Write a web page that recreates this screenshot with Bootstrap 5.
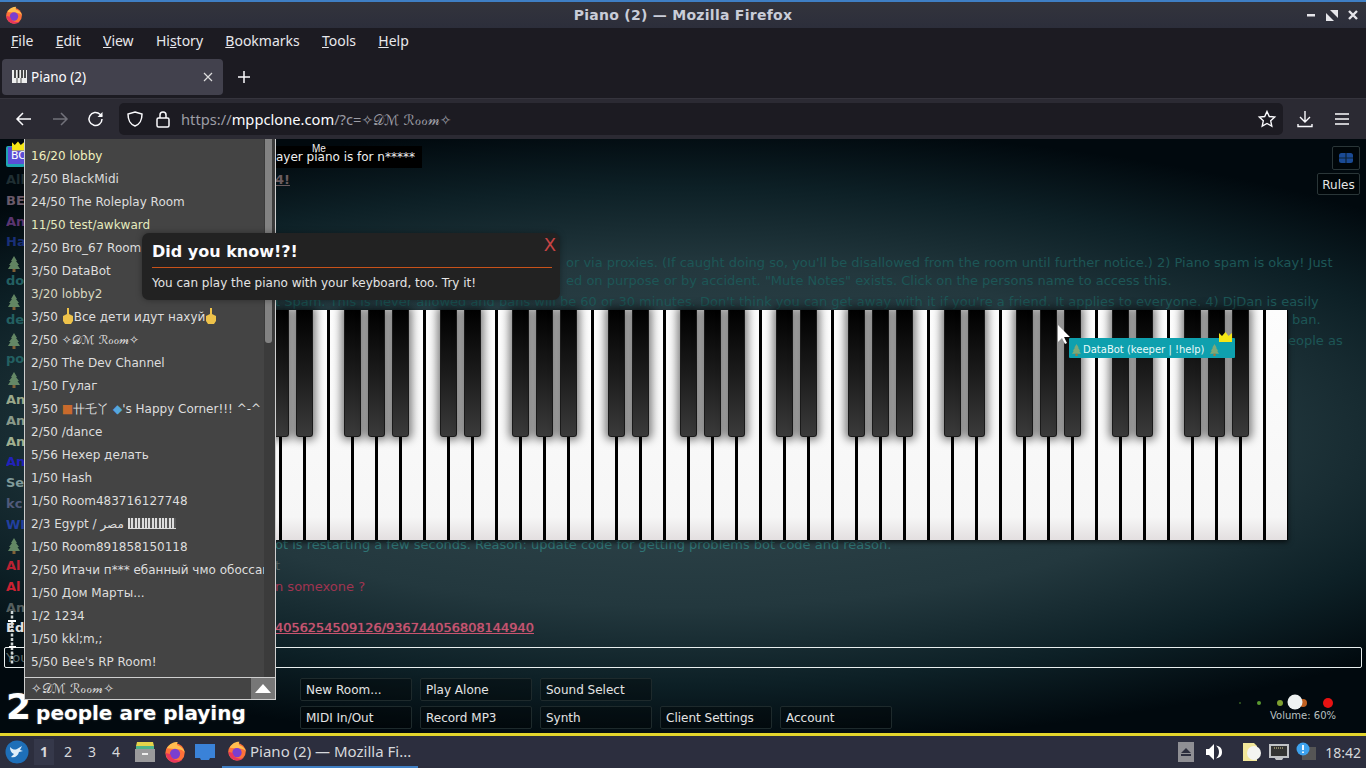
<!DOCTYPE html>
<html lang="en">
<head>
    <meta charset="UTF-8">
    <meta name="viewport" content="width=device-width, initial-scale=1.0">
    <title>Piano (2)</title>
    <link href="https://cdn.jsdelivr.net/npm/bootstrap@5.3.0/dist/css/bootstrap.min.css" rel="stylesheet">
    <style>
        html, body { height: 768px; }
        body { background: #000; font-family: "Noto Sans", sans-serif; color: #fbfbfe; }

        /* window chrome */
        .win-title { height: 28px; border-top: 2px solid #3f7fc4; background: linear-gradient(#33343c, #2c2e3b); }
        .win-title .caption { font: bold 14px "DejaVu Sans", sans-serif; color: #c9cdd8; letter-spacing: .27px; }
        .win-logo { left: 5px; top: 4px; }
        .win-btns { right: 6px; top: 6px; gap: 7px; }
        .menu-strip { height: 27px; background: #1c1b22; padding: 0 0 2px 11px; gap: 22.25px; font-size: 14px; color: #e8e8ec; }
        .tab-strip { height: 43px; background: #1c1b22; padding-left: 2px; }
        .tab-item { width: 221px; height: 36px; margin-top: 4px; background: #42414d; border-radius: 4px; font-size: 13.5px; padding: 0 10px; gap: 4px; }
        .tab-plus { margin-left: 5px; margin-top: 4px; }
        .tool-strip { height: 41px; background: #2b2a33; border-top: 1px solid #35343d; padding-left: 14px; }
        .tool-ico { width: 20px; height: 20px; }
        .tool-dl { margin-left: 12px; }
        .tool-menu { margin-left: 17px; }
        .url-box { width: 1164px; height: 32px; margin-left: 13px; background: #1c1b22; border-radius: 5px; padding: 0 6px 0 6px; font-size: 14.7px; color: #9d9da5; }
        .url-box b { font-weight: 400; color: #fbfbfe; }
        .url-script { font-family: "DejaVu Sans", serif; font-size: 14px; }

        /* the piano room */
        .room-stage { height: 594px; background: radial-gradient(ellipse 1000px 310px at 50% 50%, #33494f 0%, #23383e 55%, #0d2026 80%, #01090e 100%); font-family: "DejaVu Sans", sans-serif; }
        .top-btns { padding: 7px 6px 0 0; height: 56px; }
        .mini-btn { background: rgba(0,0,0,.3); border: 1px solid #2a3638; border-radius: 2px; }
        .net-btn { width: 28px; height: 24px; margin-bottom: 3px; }
        .rules-btn { width: 43px; height: 22px; font-size: 12px; color: #e6e6e6; line-height: 22px; text-align: center; }

        .chat-layer { left: 6px; top: 32px; right: 0; font-size: 13px; line-height: 18px; z-index: 0; }
        .chat-row { height: 18px; margin-bottom: 2.75px; white-space: nowrap; }
        .chat-row.wrapped { margin-bottom: 0; }
        .chat-nick { width: 269px; font-weight: 700; overflow: hidden; flex: none; }
        .chat-tree { margin-left: 2px; opacity: .75; }
        .chat-msg { color: #1d5656; }
        .msg-live { color: #2f7575; }
        .msg-grey { color: #54605f; }
        .msg-red { color: #a03450; }
        .msg-link { color: #c9546f; text-decoration: underline; letter-spacing: -.06px; text-shadow: 0 0 1px #c9546f; }
        .msg-dim { color: #6a5c5f; text-decoration: underline; font-weight: 700; }
        .ind-a { padding-left: 291px; }
        .ind-b { padding-left: 1017px; }
        .ind-c { padding-left: 1013px; }

        .piano-wrap { width: 1248px; height: 230px; margin: 115px 0 0 40px; background: #000; z-index: 1; box-shadow: 0 2px 5px rgba(0,0,0,.7); }
        .wkey { width: 21px; margin: 0 1.5px; height: 100%; background: linear-gradient(#fdfdfd 0%, #f6f6f6 90%, #e3dfe0 100%); }
        .bkey { top: 0; width: 17px; height: 127px; background: linear-gradient(#000 0%, #1b1b1b 50%, #3a3a3a 100%); border-radius: 0 0 3px 3px; border: 1px solid #1a1a1a; border-top: 0; box-shadow: 0 0 8px 3px rgba(0,0,0,.5); }

        .chat-box { width: auto; align-self: stretch; margin: 107px 4px 0; height: 21px; background: transparent; border: 1px solid #e8eeee; border-radius: 2px; padding: 0 1px; font-size: 13px; color: #789; z-index: 1; }
        .chat-box::placeholder { color: #5a6a6a; }
        .ctrl-row { margin-top: 10px; height: 50px; z-index: 1; }
        .people-box { width: 300px; color: #fff; font-weight: 700; line-height: 1; padding: 0 0 3px 6px; gap: 5px; text-shadow: 0 0 2px rgba(255,255,255,.35); }
        .people-num { font-size: 36px; }
        .people-txt { font-size: 20px; padding-bottom: 2px; }
        .ctl-btn { width: 112px; height: 23px; padding: 1px 0 0 5px; background: rgba(0,0,0,.3); border: 1px solid #1e2a2c; border-radius: 2px; color: #e4e4e4; font-size: 12px; line-height: 20px; text-align: left; }
        .btn-rows { gap: 5px; }
        .vol-box { width: 100px; margin-left: auto; margin-right: 28px; font-size: 10px; color: #b8c0c0; text-align: right; padding: 16px 2px 0 0; line-height: 12px; }

        /* overlays */
        .room-menu { left: 24px; top: 0; width: 252px; z-index: 3; }
        .room-scroll { height: 538px; background: #444; border-left: 1px solid #cfcfcf; border-right: 1px solid #cfcfcf; overflow: hidden; padding-top: 6px; }
        .room-track { top: 0; right: 0; width: 11px; bottom: 0; background: #3b3b3b; }
        .room-thumb { top: 0; right: 3px; width: 7px; height: 204px; background: #828282; border-radius: 0 0 3px 3px; }
        .room-row { height: 23px; line-height: 23px; padding: 0 0 0 6px; font-size: 12px; color: #dedede; background: transparent; border: 0; white-space: nowrap; overflow: hidden; width: 239px; }
        .room-row.lit { color: #f1f0bd; }
        .room-row.lit2 { color: #e4eabe; }
        .room-row.lit3 { color: #d8d8c0; }
        .room-keys { display: inline-block; width: 48px; height: 11px; vertical-align: -1px; background: repeating-linear-gradient(90deg, #ddd 0 2px, #555 2px 3.4px); border-bottom: 1px solid #ddd; }
        .room-hand { vertical-align: -3px; }
        .room-bear { color: #c96a2c; }
        .room-gem { color: #55a7dd; }
        .room-pick { height: 23px; background: #444; border: 1px solid #cfcfcf; font: 13px "DejaVu Sans", serif; color: #d8d8d8; padding-left: 6px; line-height: 21px; }
        .room-arrow { width: 24px; background: #777; }
        .tip-box { left: 142px; top: 94px; width: 418px; height: 67px; background: #222; border-radius: 7px; padding: 8px 10px; z-index: 4; box-shadow: 0 0 6px rgba(0,0,0,.35); }
        .tip-title { font-size: 16px; font-weight: 700; line-height: 22px; height: 27px; border-bottom: 1px solid #c9521a; width: 400px; }
        .tip-text { font-size: 12px; line-height: 18px; margin-top: 6px; color: #e4e4e4; }
        .tip-x { right: 4px; top: 1px; color: #c84444; font-size: 18px; line-height: 22px; }
        .bubble-box { left: 275px; top: 7px; width: 147px; height: 22px; background: #000; color: #eee; font-size: 12px; line-height: 23px; padding-left: 1px; z-index: 2; }
        .me-tag { left: 312px; top: 4px; font: 10px/12px "Liberation Sans", sans-serif; color: #eee; z-index: 3; }
        .bo-tag { left: 6px; top: 7px; width: 19px; height: 21px; background: #5b4fd6; border: 1px solid #1fa4b0; border-width: 1px 0 3px 2px; color: #fff; font-size: 11px; line-height: 18px; padding-left: 3px; border-radius: 2px; z-index: 1; overflow: hidden; }
        .crown-a { left: 12px; top: 2px; z-index: 2; }
        .bot-tag { left: 1069px; top: 199px; width: 166px; height: 20px; background: #0ea0ae; color: #e8fbfb; font-size: 10px; line-height: 20px; padding: 4px 0 0 3px; z-index: 2; border-radius: 1px; }
        .bot-name { margin: 0 6px 0 2px; }
        .crown-b { left: 1219px; top: 193px; z-index: 3; }
        .cursor-a { left: 1058px; top: 186px; z-index: 3; }
        .fig-a { left: 8px; top: 472px; z-index: 2; }

        /* desktop panel */
        .desk-bar { height: 35px; border-top: 3px solid #e3d52c; background: #2c2e3e; font-size: 14px; color: #d6d8dc; }
        .work-num { width: 20px; height: 26px; line-height: 26px; text-align: center; margin-right: 4px; font-size: 14px; }
        .work-num.on { background: #35384a; font-weight: 700; }
        .task-btn { width: 196px; height: 32px; border-bottom: 2px solid #3f7fc4; margin-left: 6px; padding: 0 0 0 5px; gap: 3px; font-size: 15px; }
        .tray-box { gap: 7px; }
        .tray-eject { margin-right: 4px; }
        .tray-sound { margin-right: 12px; }
        .clock-txt { margin: 0 5px 0 9px; }
    </style>
</head>
<body class="d-flex flex-column overflow-hidden">
    <svg width="0" height="0" class="position-absolute">
        <symbol id="fox" viewBox="0 0 24 24">
            <circle cx="12" cy="13" r="10.5" fill="#ff7139"/>
            <path d="M3 8C6 3 10 1 15 1c-1 2-1 3 0 4 4 1 7 4 8 8-2-3-5-4-8-4z" fill="#ffbd4f"/>
            <circle cx="12" cy="14" r="5.6" fill="#7a3fd0"/>
            <path d="M2 13c0 6 5 10.500 10 10.500 3 0 6-1 8-3-5 2-12 0-13-6z" fill="#e8365d"/>
        </symbol>
        <symbol id="crown" viewBox="0 0 13 10">
            <path d="M0 1l3 3 3.500-4 3 4 3.500-3v9H0z" fill="#f5e616"/>
        </symbol>
        <symbol id="tree" viewBox="0 0 12 16">
            <path d="M6 0l3 5H8l3 4H9.500l2.500 4H0l2.500-4H1l3-4H3z" fill="#7fa878"/>
            <rect x="4.500" y="13" width="3" height="3" fill="#a8763a"/>
        </symbol>
        <symbol id="hand" viewBox="0 0 12 16">
            <path d="M5 0h2v6l4 2v5l-2 3H3l-2-3V8l4-2z" fill="#eec24a"/>
        </symbol>
    </svg>

    <!-- titlebar -->
    <div class="win-title position-relative d-flex justify-content-center align-items-center flex-none">
        <svg class="win-logo position-absolute" width="18" height="18"><use href="#fox"/></svg>
        <span class="caption">Piano (2) — Mozilla Firefox</span>
        <div class="win-btns position-absolute d-flex">
            <svg width="14" height="14" viewBox="0 0 14 14"><rect x="3" y="6" width="8" height="2.500" fill="#e6e6ea"/></svg>
            <svg width="14" height="14" viewBox="0 0 14 14"><path d="M5 2h8v8zM1 5l8 8H1z" fill="#e6e6ea"/></svg>
            <svg width="14" height="14" viewBox="0 0 14 14"><path d="M3 3l8 8M11 3l-8 8" stroke="#e6e6ea" stroke-width="2.400"/></svg>
        </div>
    </div>

    <!-- menu -->
    <div class="menu-strip d-flex align-items-center">
        <span><u>F</u>ile</span><span><u>E</u>dit</span><span><u>V</u>iew</span><span>Hi<u>s</u>tory</span><span><u>B</u>ookmarks</span><span><u>T</u>ools</span><span><u>H</u>elp</span>
    </div>

    <!-- tabs -->
    <div class="tab-strip d-flex">
        <div class="tab-item d-flex align-items-center">
            <svg width="15" height="14" viewBox="0 0 15 14"><rect width="15" height="13" fill="#eee"/><path d="M3 0v8M6.500 0v8M10 0v8M13 0v8" stroke="#222" stroke-width="1.600"/><path d="M5 8v5M9 8v5" stroke="#555"/></svg>
            <span class="flex-grow-1">Piano (2)</span>
            <svg width="10" height="10" viewBox="0 0 10 10"><path d="M1 1l8 8M9 1l-8 8" stroke="#ddd" stroke-width="1.200"/></svg>
        </div>
        <svg class="tab-plus" width="32" height="36" viewBox="0 0 32 36"><path d="M10 18h12M16 12v12" stroke="#fbfbfe" stroke-width="1.500"/></svg>
    </div>

    <!-- nav bar -->
    <div class="tool-strip d-flex align-items-center">
        <svg class="tool-ico me-3" viewBox="0 0 20 20"><path d="M17 10H3M9 4l-6 6 6 6" fill="none" stroke="#fbfbfe" stroke-width="1.500"/></svg>
        <svg class="tool-ico me-3" viewBox="0 0 20 20"><path d="M3 10h14M11 4l6 6-6 6" fill="none" stroke="#71717a" stroke-width="1.500"/></svg>
        <svg class="tool-ico" viewBox="0 0 20 20"><path d="M16 10a6.500 6.500 0 1 1-2-4.700L16 7" fill="none" stroke="#fbfbfe" stroke-width="1.500"/><path d="M16.500 3v5h-5z" fill="#fbfbfe"/></svg>
        <div class="url-box d-flex align-items-center">
            <svg class="tool-ico" viewBox="0 0 20 20"><path d="M10 3l7 2c0 7-2 10-7 12-5-2-7-5-7-12z" fill="none" stroke="#fbfbfe" stroke-width="1.500"/></svg>
            <svg class="tool-ico ms-2 me-2" viewBox="0 0 20 20"><rect x="4" y="9" width="12" height="9" rx="1.500" fill="none" stroke="#fbfbfe" stroke-width="1.500"/><path d="M7 9V6a3 3 0 0 1 6 0v3" fill="none" stroke="#fbfbfe" stroke-width="1.500"/></svg>
            <span>https://<b>mppclone.com</b>/?c=<span class="url-script">✧𝒟ℳ ℛℴℴ𝓂✧</span></span>
            <svg class="tool-ico ms-auto" viewBox="0 0 20 20"><path d="M10 2.500l2.300 5 5.400.6-4 3.700 1.100 5.400L10 14.500l-4.800 2.700 1.100-5.400-4-3.700 5.400-.6z" fill="none" stroke="#fbfbfe" stroke-width="1.400"/></svg>
        </div>
        <svg class="tool-ico tool-dl" viewBox="0 0 20 20"><path d="M10 2v11M5 8l5 5 5-5M3 15v2.500h14V15" fill="none" stroke="#fbfbfe" stroke-width="1.400"/></svg>
        <svg class="tool-ico tool-menu" viewBox="0 0 20 20"><path d="M3 5h14M3 10h14M3 15h14" stroke="#fbfbfe" stroke-width="1.500"/></svg>
    </div>

    <!-- piano room -->
    <div class="room-stage position-relative d-flex flex-column">
        <div id="chatLayer" class="chat-layer position-absolute"></div>

        <div class="top-btns d-flex flex-column align-items-end position-relative">
            <div class="mini-btn net-btn d-flex align-items-center justify-content-center">
                <svg width="14" height="10" viewBox="0 0 14 10"><rect width="14" height="10" rx="2.500" fill="#1a4a94"/><path d="M7 0v10M0 5h14" stroke="#0d2233" stroke-width="1.200"/></svg>
            </div>
            <div class="mini-btn rules-btn">Rules</div>
        </div>

        <div id="piano" class="piano-wrap d-flex position-relative"></div>

        <input class="chat-box form-control shadow-none position-relative" placeholder="You can chat with this thing.">

        <div class="ctrl-row d-flex position-relative">
            <div class="people-box d-flex align-items-end">
                <span class="people-num">2</span><span class="people-txt">people are playing</span>
            </div>
            <div class="btn-rows d-flex flex-column">
                <div class="d-flex gap-2">
                    <button class="ctl-btn btn">New Room...</button>
                    <button class="ctl-btn btn">Play Alone</button>
                    <button class="ctl-btn btn">Sound Select</button>
                </div>
                <div class="d-flex gap-2">
                    <button class="ctl-btn btn">MIDI In/Out</button>
                    <button class="ctl-btn btn">Record MP3</button>
                    <button class="ctl-btn btn">Synth</button>
                    <button class="ctl-btn btn">Client Settings</button>
                    <button class="ctl-btn btn">Account</button>
                </div>
            </div>
            <div class="vol-box">
                <svg class="d-block" width="100" height="16" viewBox="0 0 100 16">
                    <circle cx="2" cy="9" r=".8" fill="#5a9a30"/>
                    <circle cx="21" cy="9" r="2" fill="#5a9a30"/>
                    <circle cx="42" cy="9" r="3" fill="#7fa030"/>
                    <circle cx="65" cy="9" r="4" fill="#c06020"/>
                    <circle cx="90" cy="9" r="5" fill="#e81212"/>
                    <circle cx="57" cy="8" r="7.500" fill="#eef2f2"/>
                </svg>
                Volume: 60%
            </div>
        </div>

        <!-- overlays -->
        <div class="bo-tag position-absolute">BO</div>
        <svg class="crown-a position-absolute" width="12" height="10"><use href="#crown"/></svg>
        <div class="bubble-box position-absolute">ayer piano is for n*****</div>
        <div class="me-tag position-absolute">Me</div>

        <div class="bot-tag position-absolute d-flex align-items-center">
            <svg width="9" height="12"><use href="#tree"/></svg><span class="bot-name">DataBot (keeper | !help)</span><svg width="9" height="12"><use href="#tree"/></svg>
        </div>
        <svg class="crown-b position-absolute" width="13" height="10"><use href="#crown"/></svg>
        <svg class="cursor-a position-absolute" width="13" height="20" viewBox="0 0 13 20"><path d="M0 0v17l4-4 3 6 2-1-3-6h6z" fill="#fff"/></svg>
        <svg class="fig-a position-absolute" width="9" height="54" viewBox="0 0 9 54"><path d="M4 0v54" stroke="#cfd6d6" stroke-width="2.500" stroke-dasharray="3 1.500"/><path d="M0 10h8M1 36h7" stroke="#fff" stroke-width="2"/></svg>

        <div class="room-menu position-absolute">
            <div class="room-scroll position-relative">
                <div id="roomList" class="list-group list-group-flush rounded-0"></div>
                <div class="room-track position-absolute"></div>
                <div class="room-thumb position-absolute"></div>
            </div>
            <div class="room-pick d-flex">
                <span class="flex-grow-1">✧𝒟ℳ ℛℴℴ𝓂✧</span>
                <div class="room-arrow d-flex align-items-center justify-content-center">
                    <svg width="16" height="9" viewBox="0 0 16 9"><path d="M8 0l8 9H0z" fill="#fff"/></svg>
                </div>
            </div>
        </div>

        <div class="tip-box position-absolute">
            <div class="tip-title">Did you know!?!</div>
            <div class="tip-text">You can play the piano with your keyboard, too. Try it!</div>
            <div class="tip-x position-absolute">X</div>
        </div>
    </div>

    <!-- desktop panel -->
    <div class="desk-bar d-flex align-items-center position-relative">
        <svg class="ms-1 me-1" width="26" height="26" viewBox="0 0 26 26"><circle cx="13" cy="13" r="11.500" fill="#1e6fb8"/><path d="M6 8c3 3 5 3 7 2l5-3-2 4 3 1-4 1c-1 4-4 6-8 5l3-3c-3-1-4-4-4-7z" fill="#dfeefa"/></svg>
        <div class="work-num on">1</div><div class="work-num">2</div><div class="work-num">3</div><div class="work-num">4</div>
        <svg class="ms-1 me-2" width="22" height="24" viewBox="0 0 22 24"><path d="M3 2h16l1 4H2z" fill="#e4d34a"/><path d="M2 6h18v3H2z" fill="#4fb38a"/><rect x="1" y="9" width="20" height="13" fill="#9a9a9c"/><rect x="8" y="13" width="6" height="2" fill="#eee"/></svg>
        <svg class="me-2" width="22" height="24"><use href="#fox"/></svg>
        <svg width="22" height="20" viewBox="0 0 22 20"><path d="M1 2h20v14h-5l-1 2H7l-1-2H1z" fill="#3a82d8"/></svg>
        <div class="task-btn d-flex align-items-center">
            <svg width="20" height="22"><use href="#fox"/></svg><span>Piano (2) — Mozilla Fi...</span>
        </div>
        <div class="tray-box ms-auto d-flex align-items-center">
            <svg class="tray-eject" width="16" height="20" viewBox="0 0 16 20"><rect width="16" height="20" fill="#8f8f94"/><path d="M8 6l5 5H3zM3 12h10v2H3z" fill="#2c2e3e"/></svg>
            <svg class="tray-sound" width="18" height="18" viewBox="0 0 18 18"><path d="M1 6h3l5-5v16l-5-5H1z" fill="#fff"/><path d="M11 2.500c5 1 6 3.500 6 6.500s-1 5.500-6 6.500c2-2 3-4 3-6.500s-1-4.500-3-6.500z" fill="#fff"/></svg>
            <svg width="20" height="20" viewBox="0 0 20 20"><path d="M1 1h11l3 3v15H1z" fill="#f2e79a"/><circle cx="12" cy="11" r="7" fill="#f4f4f0"/></svg>
            <svg width="20" height="16" viewBox="0 0 20 16"><rect x="1" y="1" width="18" height="12" fill="#333" stroke="#c0c2c6" stroke-width="2"/><path d="M5 13h10l-2 3H7z" fill="#c0c2c6"/><path d="M5 4h10" stroke="#e3d9a0" stroke-dasharray="1 1"/></svg>
            <svg width="20" height="20" viewBox="0 0 20 20"><rect x="6" y="5" width="14" height="13" fill="#555"/><circle cx="7" cy="7" r="6.500" fill="#3da2ee"/><path d="M7 3v5M7 9.500v1.500" stroke="#fff" stroke-width="1.800"/></svg>
        </div>
        <span class="clock-txt">18:42</span>
    </div>

    <script>
        // piano: 52 white keys, black keys follow the usual A0..C8 layout
        const piano = document.getElementById('piano');
        const blackAfter = [1, 0, 1, 1, 0, 1, 1]; // starting from A
        for (let i = 0; i < 52; i++) {
            const w = document.createElement('div');
            w.className = 'wkey';
            piano.appendChild(w);
        }
        for (let i = 0; i < 51; i++) {
            if (!blackAfter[i % 7]) continue;
            const b = document.createElement('div');
            b.className = 'bkey position-absolute';
            b.style.left = (24 * (i + 1) - 8.5) + 'px';
            piano.appendChild(b);
        }

        // room list
        const hand = '<svg class="room-hand" width="12" height="16"><use href="#hand"/></svg>';
        const rooms = [
            ['16/20 lobby', 'lit'], ['2/50 BlackMidi'], ['24/50 The Roleplay Room'], ['11/50 test/awkward', 'lit2'],
            ['2/50 Bro_67 Room'], ['3/50 DataBot'], ['3/20 lobby2', 'lit3'],
            ['3/50 ' + hand + 'Все дети идут нахуй' + hand],
            ['2/50 ✧𝒟ℳ ℛℴℴ𝓂✧'], ['2/50 The Dev Channel'], ['1/50 Гулаг'],
            ['3/50 <span class="room-bear">■</span>卄乇丫 <span class="room-gem">◆</span>\'s Happy Corner!!! ^-^'],
            ['2/50 /dance'], ['5/56 Нехер делать'], ['1/50 Hash'], ['1/50 Room483716127748'],
            ['2/3 Egypt / مصر <span class="room-keys"></span>'], ['1/50 Room891858150118'],
            ['2/50 Итачи п*** ебанный чмо обоссанный'], ['1/50 Дом Марты...'], ['1/2 1234'], ['1/50 kkl;m,;'], ["5/50 Bee's RP Room!"]
        ];
        const list = document.getElementById('roomList');
        rooms.forEach(r => {
            const row = document.createElement('div');
            row.className = 'list-group-item room-row ' + (r[1] || '');
            row.innerHTML = r[0];
            list.appendChild(row);
        });

        // chat lines behind the piano
        const lines = [
            ['All', '#1f2e32', '4!', 'msg-dim'],
            ['BEN', '#6a5a6a'],
            ['Anon', '#5a3570'],
            ['Hal', '#1a3078'],
            ['*', '', "or via proxies. (If caught doing so, you'll be disallowed from the room until further notice.) 2) Piano spam is okay! Just", 'ind-a', 1],
            ['do', '#236062', 'ed on purpose or by accident. "Mute Notes" exists. Click on the persons name to access this.', 'ind-a'],
            ['*', '', "t Spam. This is never allowed and bans will be 60 or 30 minutes. Don't think you can get away with it if you're a friend. It applies to everyone. 4) DjDan is easily", '', 1],
            ['de', '#236062', 'ban.', 'ind-b'],
            ['*', '', 'eople as', 'ind-c', 1],
            ['po', '#236062'],
            ['*', ''],
            ['An', '#9aa88a'], ['An', '#8a9a8a'], ['An', '#a0b090'], ['An', '#2222bb'],
            ['Se', '#7f9a9a'], ['kc', '#505a7a'], ['WI', '#2240a0'],
            ['*', '', 'ot is restarting a few seconds. Reason: update code for getting problems bot code and reason.', 'msg-live'],
            ['Al', '#bb2233', 't', 'msg-grey'],
            ['Al', '#cc2233', 'n somexone ?', 'msg-red'],
            ['An', '#555f5f'],
            ['Ed', '#e0e0e0', '4056254509126/936744056808144940', 'msg-link']
        ];
        const chat = document.getElementById('chatLayer');
        lines.forEach(l => {
            const row = document.createElement('div');
            row.className = 'chat-row d-flex' + (l[4] ? ' wrapped' : '');
            const nick = l[0] === '*'
                ? '<svg class="chat-tree" width="12" height="16"><use href="#tree"/></svg>'
                : l[0];
            row.innerHTML = '<span class="chat-nick" style="color:' + l[1] + '">' + nick + '</span>' +
                '<span class="chat-msg ' + (l[3] || '') + '">' + (l[2] || '') + '</span>';
            chat.appendChild(row);
        });
    </script>
</body>
</html>
